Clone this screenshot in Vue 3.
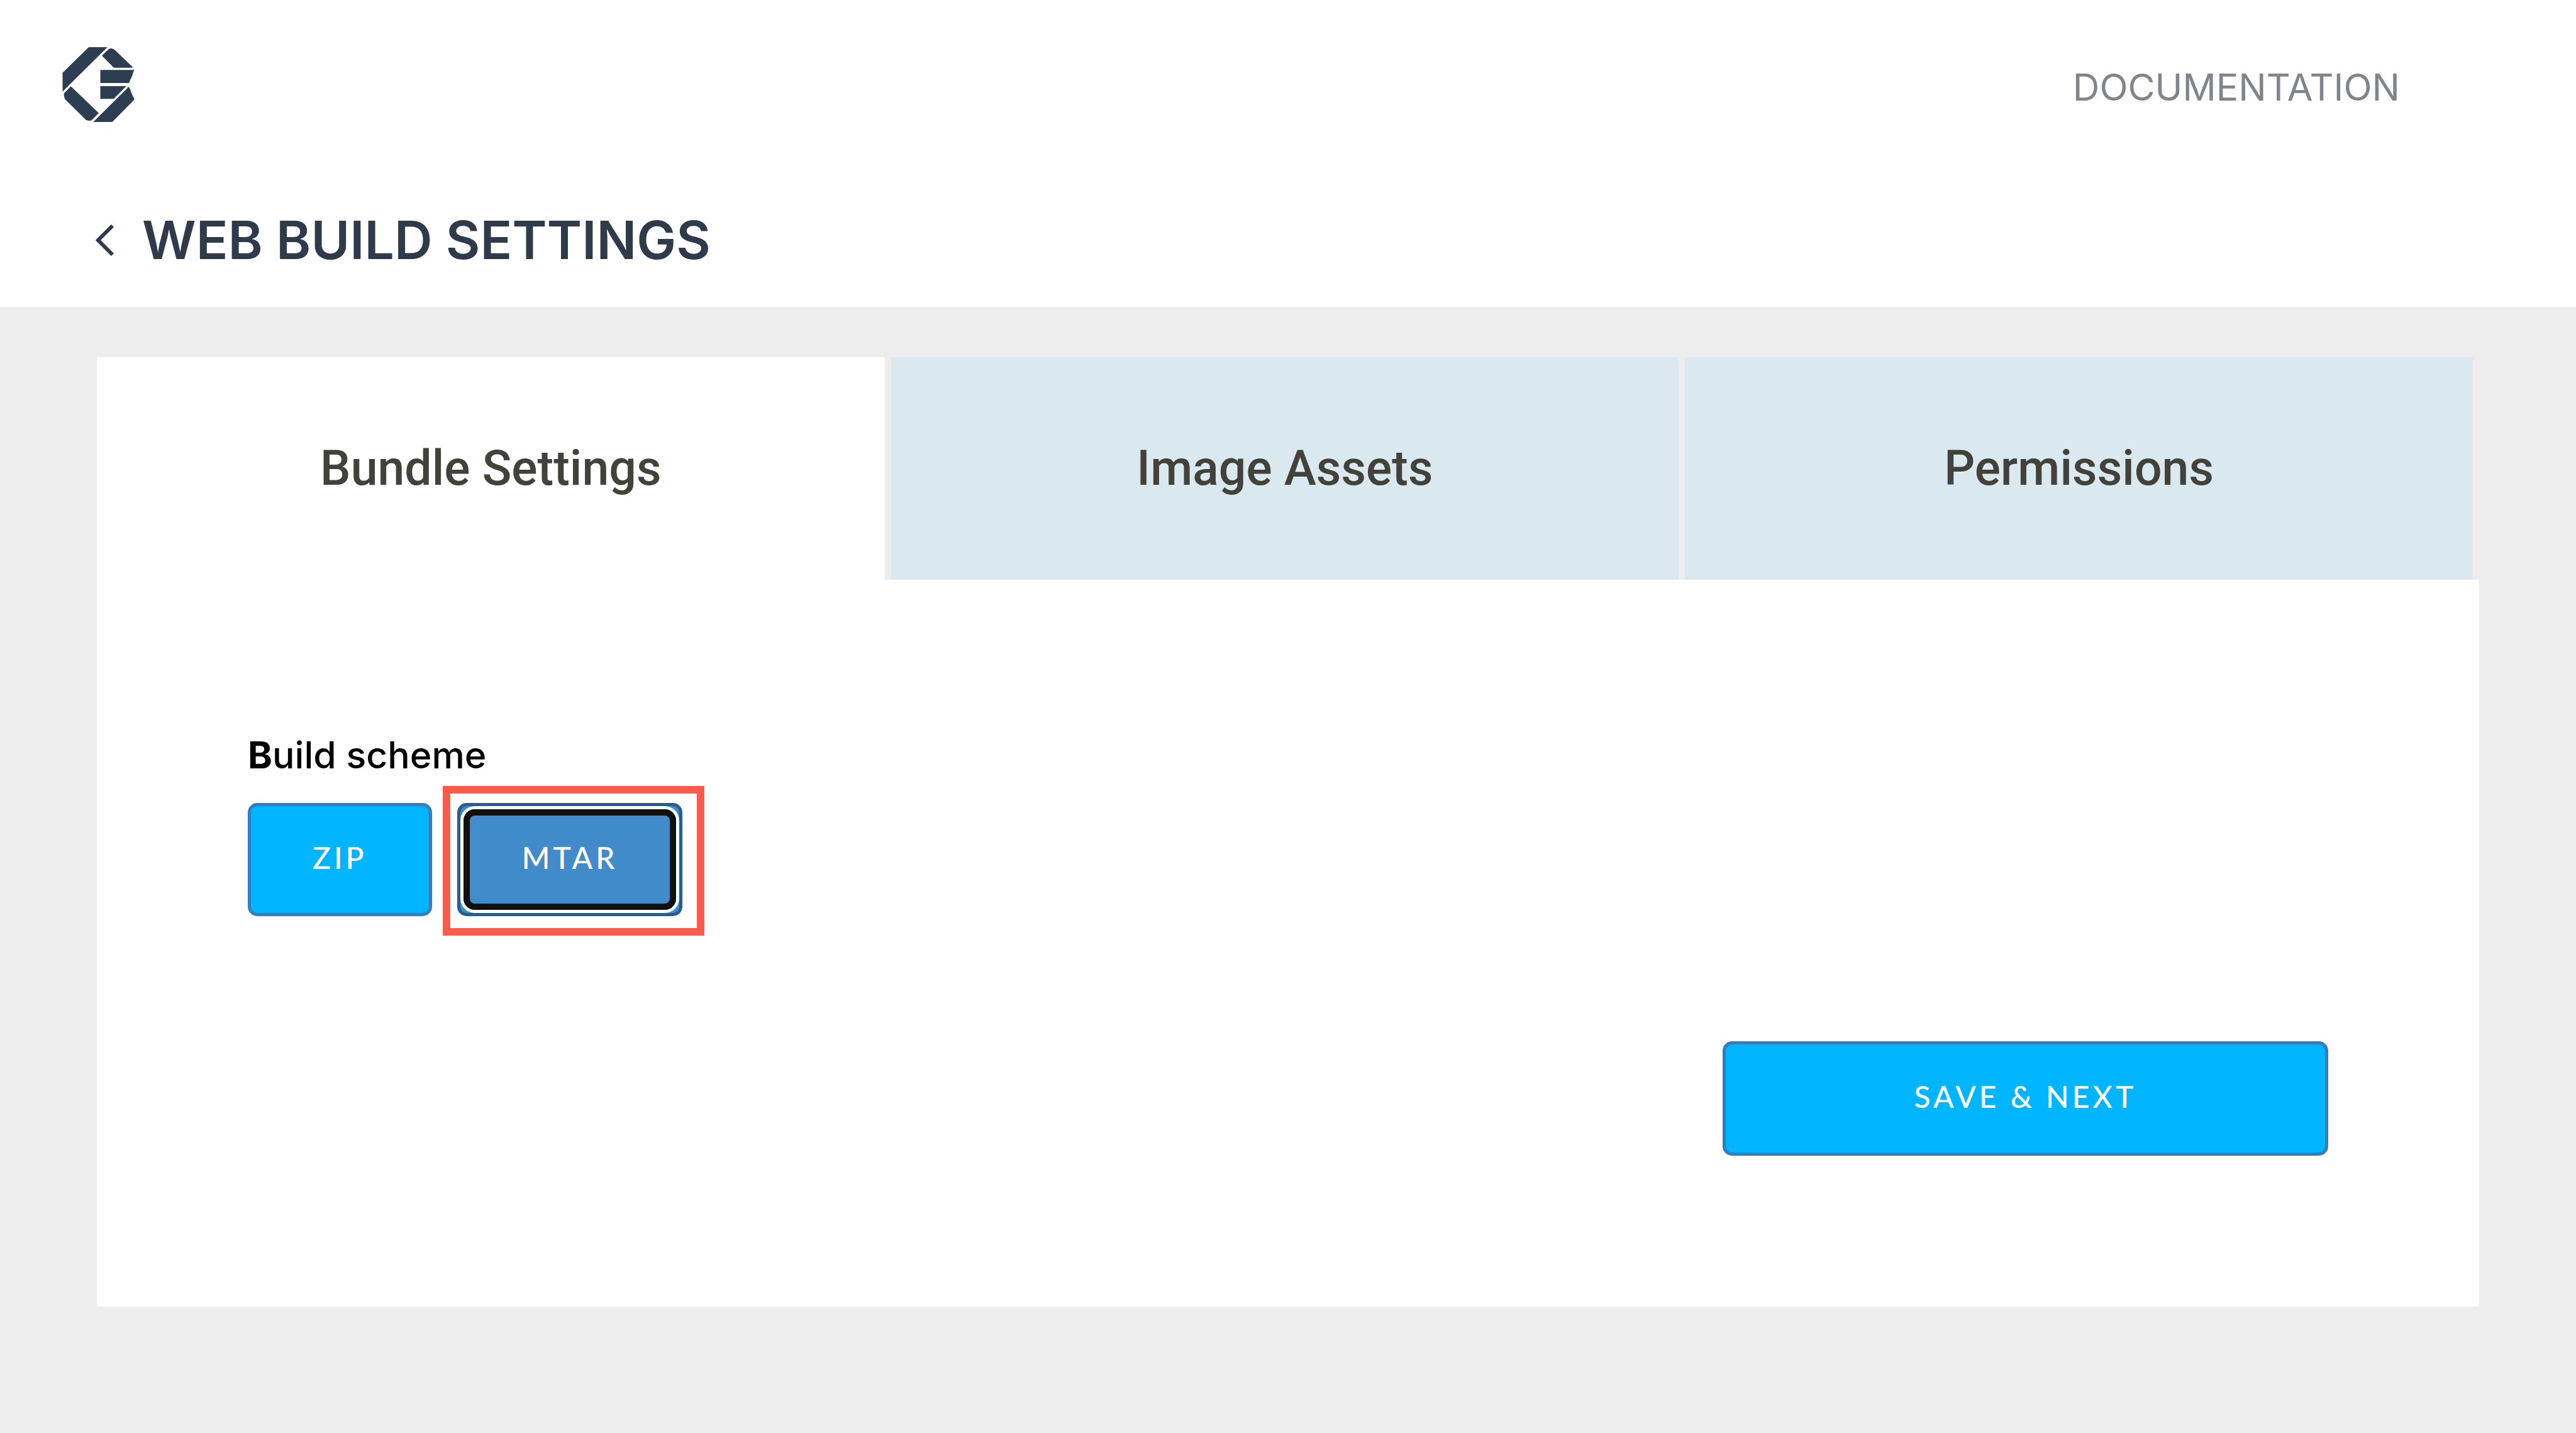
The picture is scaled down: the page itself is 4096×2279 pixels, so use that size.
<script setup>
import { ref } from 'vue'

const tabs = ['Bundle Settings', 'Image Assets', 'Permissions']
const activeTab = ref(0)

const schemes = ['ZIP', 'MTAR']
const scheme = ref('MTAR')
</script>

<template>
  <div class="page">
    <header class="header">
      <div class="topbar">
        <a class="logo" href="#" aria-label="Home">
          <svg viewBox="0 0 414 432" fill="#2d3e53" aria-hidden="true">
            <path d="M151 0H259L0 257V148Z" />
            <path d="M266 12Q274 6 285 8Q294 9 304 18L403 113V119H296L227 49Z" />
            <path d="M218 132H413L399 172Q390 186 384 207H218Z" />
            <path d="M218 225H368L295 299H218Z" />
            <path d="M382 229L390 242Q398 272 413 295V304L287 432H177Z" />
            <path d="M48 226L209 380L167 423Q150 428 134 418L16 303Q8 291 8 267Z" />
          </svg>
        </a>
        <nav>
          <a class="doc-link" href="#">DOCUMENTATION</a>
        </nav>
      </div>
      <div class="title-row">
        <a class="back" href="#" aria-label="Back">
          <svg viewBox="0 0 30 50" fill="none" stroke="#2f3a4a" stroke-width="6" aria-hidden="true">
            <path d="M27 2L4 25L27 48" />
          </svg>
        </a>
        <h1>WEB BUILD SETTINGS</h1>
      </div>
    </header>

    <main class="content">
      <div class="tabs" role="tablist">
        <button
          v-for="(tab, i) in tabs"
          :key="tab"
          class="tab"
          :class="{ active: i === activeTab }"
          type="button"
          role="tab"
          :aria-selected="i === activeTab"
          @click="activeTab = i"
        >{{ tab }}</button>
      </div>

      <section class="panel">
        <div id="scheme-label" class="label">Build scheme</div>
        <div class="schemes" role="group" aria-labelledby="scheme-label">
          <div v-for="name in schemes" :key="name" class="scheme" :class="{ marked: name === scheme }">
            <button
              class="btn"
              :class="{ selected: name === scheme }"
              type="button"
              :aria-pressed="name === scheme"
              @click="scheme = name"
            >{{ name }}</button>
          </div>
        </div>
        <div class="actions">
          <button class="btn save" type="button">SAVE &amp; NEXT</button>
        </div>
      </section>
    </main>
  </div>
</template>

<style>
body {
  margin: 0;
  background: #ededed;
}
</style>

<style scoped>
.page {
  min-height: 100vh;
  background: #ededed;
  font-family: Inter, "Open Sans", sans-serif;
}

.header {
  padding: 75px 280px 56px 99px;
  background: #fff;
}

.topbar {
  display: flex;
  align-items: center;
  justify-content: space-between;
  margin-bottom: 138px;
}

.logo svg {
  display: block;
  width: 115px;
  height: 119px;
}

.doc-link {
  display: block;
  padding-top: 8px;
  color: #80848c;
  font-size: 59px;
  line-height: 70px;
  text-decoration: none;
}

.title-row {
  display: flex;
  align-items: center;
  gap: 44px;
  padding-left: 53px;
}

.back svg {
  display: block;
  width: 30px;
  height: 50px;
}

h1 {
  margin: 0;
  color: #2f3a4a;
  font-size: 84px;
  font-weight: 600;
  line-height: 100px;
}

.content {
  padding: 80px 154px 0;
}

.tabs {
  display: grid;
  grid-template-columns: repeat(3, 1fr);
}

.tab {
  padding: 127px 0;
  border: 0;
  border-right: 10px solid #ededed;
  background: #dae8ef;
  color: #42413a;
  font-family: Roboto, Lato, sans-serif;
  font-size: 77px;
  font-weight: 500;
  line-height: 100px;
}

.tab.active {
  background: #fff;
}

.panel {
  padding: 244px 240px 240px;
  background: #fff;
}

.label {
  margin-bottom: 41px;
  color: #000;
  font-size: 59px;
  font-weight: 500;
  line-height: 70px;
}

.label::first-letter {
  font-weight: 700;
}

.schemes {
  display: flex;
  gap: 40px;
  margin-bottom: 199px;
}

.scheme {
  position: relative;
}

.scheme.marked::after {
  content: "";
  position: absolute;
  inset: -27px -35px -31px -23px;
  border: 12px solid #ff5a4b;
  pointer-events: none;
}

.btn {
  position: relative;
  box-sizing: border-box;
  display: block;
  height: 180px;
  padding: 0 98px 8px;
  border: 5px solid #357ebd;
  border-radius: 15px;
  background: #00b5ff;
  color: #fff;
  font-family: Lato, sans-serif;
  font-size: 48px;
  font-weight: 500;
  letter-spacing: 5px;
}

.btn.selected {
  border-color: #285e8e;
  background: #428bca;
}

.btn.selected::after {
  content: "";
  position: absolute;
  inset: 5px;
  border: 10px solid #101010;
  border-radius: 18px;
  box-shadow: 0 0 0 5px #fff;
}

.actions {
  display: flex;
  justify-content: flex-end;
}

.save {
  width: 963px;
  height: 182px;
}
</style>
